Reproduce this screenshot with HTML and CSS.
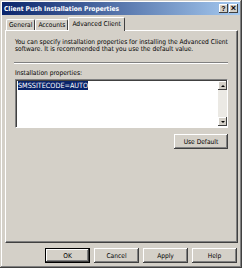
FILE: index.html
```html
<!DOCTYPE html>
<html lang="en">
<head>
    <meta charset="UTF-8">
    <title>Client Push Installation Properties</title>
    <link rel="stylesheet" href="styles.css">
</head>
<body>
    <div class="window">
        <div class="titlebar">
            <span class="title">Client Push Installation Properties</span>
            <div class="title-buttons">
                <span class="tbtn">?</span>
                <span class="tbtn close">&#215;</span>
            </div>
        </div>

        <div class="dialog">
            <div class="tabs">
                <div class="tab">General</div>
                <div class="tab">Accounts</div>
                <div class="tab active">Advanced Client</div>
            </div>

            <div class="panel">
                <p class="intro">You can specify installation properties for installing the Advanced Client software. It is recommended that you use the default value.</p>
                <div class="sep"></div>
                <label class="field-label">Installation properties:</label>
                <div class="textbox">
                    <div class="text-content"><span class="selected">SMSSITECODE=AUTO</span></div>
                    <div class="scrollbar">
                        <div class="arrow up"></div>
                        <div class="track"></div>
                        <div class="arrow down"></div>
                    </div>
                </div>
                <div class="panel-actions">
                    <button class="btn wide">Use Default</button>
                </div>
            </div>

            <div class="footer">
                <button class="btn default">OK</button>
                <button class="btn">Cancel</button>
                <button class="btn">Apply</button>
                <button class="btn">Help</button>
            </div>
        </div>
    </div>
</body>
</html>
```

FILE: styles.css
```css
body {
    margin: 0;
    padding: 0;
    font-family: 'DejaVu Sans Condensed', 'Liberation Sans', Arial, sans-serif;
    font-size: 6.6px;
    color: #000;
    background: #d4d0c8;
}
.window {
    box-sizing: border-box;
    width: 242px;
    height: 268px;
    padding: 2px;
    background: #d4d0c8;
    box-shadow: inset -1px -1px 0 #404040, inset 1px 1px 0 #d4d0c8, inset -2px -2px 0 #808080, inset 2px 2px 0 #fff;
}
.titlebar {
    height: 13px;
    display: flex;
    align-items: center;
    justify-content: space-between;
    padding: 0 2px 0 2px;
    background: linear-gradient(to right, #0a246a, #a6caf0);
}
.title {
    color: #fff;
    font-weight: bold;
    font-size: 6.6px;
}
.title-buttons {
    display: flex;
}
.tbtn {
    box-sizing: border-box;
    width: 9px;
    height: 9px;
    background: #d4d0c8;
    box-shadow: inset -1px -1px 0 #404040, inset 1px 1px 0 #fff;
    font-family: 'Liberation Sans', Arial, sans-serif;
    font-size: 7px;
    font-weight: bold;
    line-height: 9px;
    text-align: center;
}
.tbtn.close {
    margin-left: 1px;
    font-size: 9px;
}
.dialog {
    padding: 2px 2px 0 3px;
}
.tabs {
    display: flex;
    align-items: flex-end;
    height: 13px;
}
.tab {
    box-sizing: border-box;
    height: 11px;
    padding: 0 2px;
    line-height: 10px;
    border-top: 1px solid #fff;
    border-left: 1px solid #fff;
    border-right: 1px solid #404040;
    border-radius: 2px 2px 0 0;
}
.tab:first-child {
    margin-left: 1px;
}
.tab.active {
    height: 14px;
    margin-bottom: -1px;
    padding: 0 3px;
    line-height: 12px;
    position: relative;
    background: #d4d0c8;
    z-index: 1;
}
.panel {
    box-sizing: border-box;
    height: 213px;
    width: 233px;
    padding: 8px 9px 0 9px;
    border-top: 1px solid #fff;
    border-left: 1px solid #fff;
    border-right: 1px solid #404040;
    border-bottom: 1px solid #404040;
    box-shadow: inset -1px -1px 0 #808080;
}
.intro {
    margin: 0;
    line-height: 7px;
}
.sep {
    margin: 9px 0 0 -1px;
    height: 0;
    border-top: 1px solid #808080;
    border-bottom: 1px solid #fff;
}
.field-label {
    display: block;
    margin-top: 6px;
    line-height: 7px;
}
.textbox {
    box-sizing: border-box;
    display: flex;
    height: 49px;
    margin-top: 2px;
    background: #fff;
    border-top: 1px solid #808080;
    border-left: 1px solid #808080;
    border-right: 1px solid #fff;
    border-bottom: 1px solid #fff;
    box-shadow: inset 1px 1px 0 #404040;
}
.text-content {
    flex: 1;
    padding: 2px 0 0 2px;
    font-size: 7.2px;
    line-height: 7px;
}
.selected {
    background: #0a246a;
    color: #fff;
}
.scrollbar {
    width: 9px;
    display: flex;
    flex-direction: column;
    padding: 1px 0;
}
.track {
    flex: 1;
    background: #ebe9e4;
}
.arrow {
    height: 9px;
    background: #d4d0c8;
    box-shadow: inset -1px -1px 0 #404040, inset 1px 1px 0 #fff;
    display: flex;
    align-items: center;
    justify-content: center;
}
.arrow::after {
    content: "";
    border-left: 2px solid transparent;
    border-right: 2px solid transparent;
}
.arrow.up::after {
    border-bottom: 2px solid #000;
}
.arrow.down::after {
    border-top: 2px solid #000;
}
.panel-actions {
    display: flex;
    justify-content: flex-end;
    margin-top: 6px;
}
.btn {
    box-sizing: border-box;
    width: 45px;
    height: 15px;
    padding: 0;
    font-family: inherit;
    font-size: 6.6px;
    color: #000;
    background: #d4d0c8;
    border: none;
    border-radius: 0;
    box-shadow: inset -1px -1px 0 #404040, inset 1px 1px 0 #fff, inset -2px -2px 0 #808080;
}
.btn.wide {
    width: 54px;
}
.btn.default {
    box-shadow: inset 0 0 0 1px #000, inset -2px -2px 0 #404040, inset 2px 2px 0 #fff, inset -3px -3px 0 #808080;
}
.footer {
    display: flex;
    justify-content: flex-end;
    gap: 4px;
    margin-top: 5px;
    padding-right: 1px;
}
```
